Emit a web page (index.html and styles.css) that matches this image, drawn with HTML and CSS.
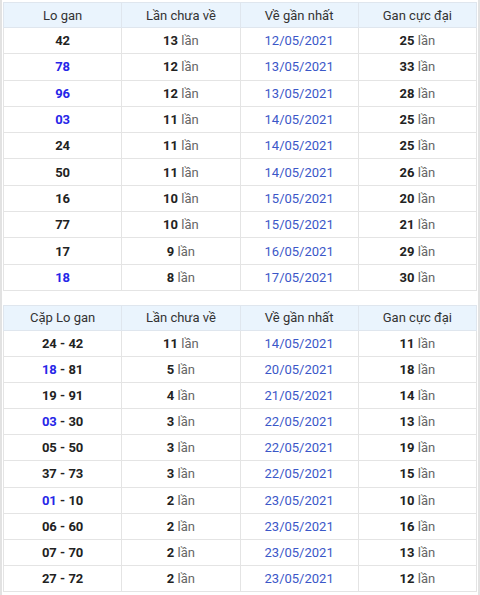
FILE: index.html
```html
<!DOCTYPE html>
<html lang="vi">
<head>
<meta charset="utf-8">
<link rel="stylesheet" href="styles.css">
</head>
<body>
<div class="wrap">
<table class="gan">
<thead><tr><th>Lo gan</th><th>Lần chưa về</th><th>Về gần nhất</th><th>Gan cực đại</th></tr></thead>
<tbody>
<tr><td><b>42</b></td><td><b>13</b> lần</td><td class="d">12/05/2021</td><td><b>25</b> lần</td></tr>
<tr><td><b class="bl">78</b></td><td><b>12</b> lần</td><td class="d">13/05/2021</td><td><b>33</b> lần</td></tr>
<tr><td><b class="bl">96</b></td><td><b>12</b> lần</td><td class="d">13/05/2021</td><td><b>28</b> lần</td></tr>
<tr><td><b class="bl">03</b></td><td><b>11</b> lần</td><td class="d">14/05/2021</td><td><b>25</b> lần</td></tr>
<tr><td><b>24</b></td><td><b>11</b> lần</td><td class="d">14/05/2021</td><td><b>25</b> lần</td></tr>
<tr><td><b>50</b></td><td><b>11</b> lần</td><td class="d">14/05/2021</td><td><b>26</b> lần</td></tr>
<tr><td><b>16</b></td><td><b>10</b> lần</td><td class="d">15/05/2021</td><td><b>20</b> lần</td></tr>
<tr><td><b>77</b></td><td><b>10</b> lần</td><td class="d">15/05/2021</td><td><b>21</b> lần</td></tr>
<tr><td><b>17</b></td><td><b>9</b> lần</td><td class="d">16/05/2021</td><td><b>29</b> lần</td></tr>
<tr><td><b class="bl">18</b></td><td><b>8</b> lần</td><td class="d">17/05/2021</td><td><b>30</b> lần</td></tr>
</tbody>
</table>
<table class="gan second">
<thead><tr><th>Cặp Lo gan</th><th>Lần chưa về</th><th>Về gần nhất</th><th>Gan cực đại</th></tr></thead>
<tbody>
<tr><td><b>24 - 42</b></td><td><b>11</b> lần</td><td class="d">14/05/2021</td><td><b>11</b> lần</td></tr>
<tr><td><b><span class="bl">18</span> - 81</b></td><td><b>5</b> lần</td><td class="d">20/05/2021</td><td><b>18</b> lần</td></tr>
<tr><td><b>19 - 91</b></td><td><b>4</b> lần</td><td class="d">21/05/2021</td><td><b>14</b> lần</td></tr>
<tr><td><b><span class="bl">03</span> - 30</b></td><td><b>3</b> lần</td><td class="d">22/05/2021</td><td><b>13</b> lần</td></tr>
<tr><td><b>05 - 50</b></td><td><b>3</b> lần</td><td class="d">22/05/2021</td><td><b>19</b> lần</td></tr>
<tr><td><b>37 - 73</b></td><td><b>3</b> lần</td><td class="d">22/05/2021</td><td><b>15</b> lần</td></tr>
<tr><td><b><span class="bl">01</span> - 10</b></td><td><b>2</b> lần</td><td class="d">23/05/2021</td><td><b>10</b> lần</td></tr>
<tr><td><b>06 - 60</b></td><td><b>2</b> lần</td><td class="d">23/05/2021</td><td><b>16</b> lần</td></tr>
<tr><td><b>07 - 70</b></td><td><b>2</b> lần</td><td class="d">23/05/2021</td><td><b>13</b> lần</td></tr>
<tr><td><b>27 - 72</b></td><td><b>2</b> lần</td><td class="d">23/05/2021</td><td><b>12</b> lần</td></tr>
</tbody>
</table>
</div>
</body>
</html>
```
FILE: styles.css
```css
html, body {
  margin: 0;
  padding: 0;
  background: #ffffff;
}
body {
  font-family: Roboto, "Liberation Sans", Arial, sans-serif;
  font-size: 13px;
  color: #555;
}
.wrap {
  border-left: 2px solid #e2e2e2;
  border-right: 2px solid #e2e2e2;
  padding: 2px 1px 0 1px;
  height: 593px;
}
.gan {
  width: 100%;
  border-collapse: collapse;
  table-layout: fixed;
  border: 1px solid #e4e4e4;
}
.second {
  margin-top: 14px;
}
.gan th {
  background: #eaf4fd;
  font-weight: 400;
  color: #333;
  height: 24px;
  padding: 0;
  border: 1px solid #dfe6ee;
  text-align: center;
}
.gan td {
  height: 25.3px;
  padding: 0;
  border: 1px solid #e4e4e4;
  text-align: center;
  color: #666;
}
.second td {
  height: 25.1px;
}
.gan td b {
  font-weight: 700;
  color: #222;
}
.gan td b.bl, .gan td .bl {
  color: #2626e8;
}
.gan td.d {
  color: #3b57c8;
}
```
